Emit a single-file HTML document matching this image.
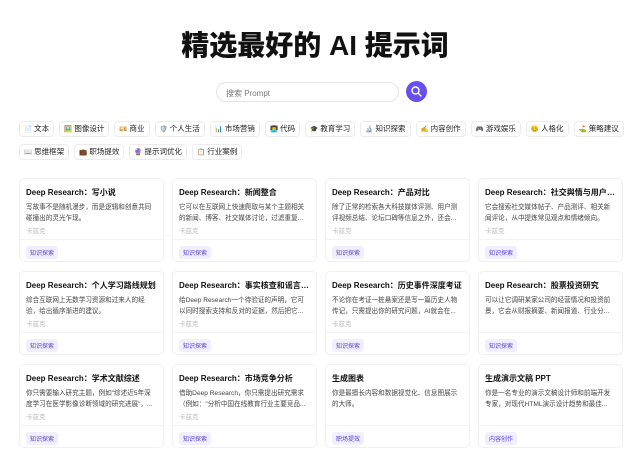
<!DOCTYPE html>
<html><head><meta charset="utf-8"><style>
*{box-sizing:border-box;margin:0;padding:0}
body{width:630px;height:453px;overflow:hidden;background:#fff;font-family:"Liberation Sans","Noto Sans CJK SC",sans-serif;color:#111}
h1{position:absolute;top:27px;left:0;width:630px;text-align:center;font-size:28px;font-weight:900;line-height:38px}
.search{position:absolute;left:216px;top:82px;width:183px;height:20px;border:1px solid #e3e3e8;border-radius:10px;font-size:8px;color:#777;padding:5px 9px}
.btn{position:absolute;left:406px;top:81px;width:21px;height:21px;border-radius:50%;background:#6a4ff0}
.chips{position:absolute;left:19px;top:121px;width:611px;display:flex;flex-wrap:wrap;gap:7px 5px}
.chip{height:16px;border:1px solid #ececf0;border-radius:4px;font-size:7.5px;line-height:14px;padding:0 4px;color:#222;white-space:nowrap}
.chip i{font-style:normal;font-size:6.5px}
.card{position:absolute;width:145px;height:84px;border:1px solid #f0f0f3;border-radius:5px}
.t{position:absolute;left:6px;top:8px;right:5px;font-size:8px;font-weight:bold;white-space:nowrap;overflow:hidden;text-overflow:ellipsis}
.d{position:absolute;left:6px;top:23px;right:8px;font-size:6.6px;line-height:11px;color:#444;height:22px;overflow:hidden}
.a{position:absolute;left:6px;top:46px;font-size:6.5px;color:#bbb}
.hr{position:absolute;left:0;right:0;top:60px;border-top:1px solid #f3f3f5}
.tag{position:absolute;left:6px;top:67px;font-size:6px;background:#f1eefe;color:#5a40d0;padding:2px 4px;border-radius:3px}
</style></head><body>
<h1>精选最好的 AI 提示词</h1>
<div class="search">搜索 Prompt</div>
<div class="btn"><svg width="21" height="21" viewBox="0 0 21 21"><circle cx="9.5" cy="9.5" r="3.5" fill="none" stroke="#fff" stroke-width="1.4"/><path d="M12 12l3 3" stroke="#fff" stroke-width="1.4" stroke-linecap="round"/></svg></div>
<div class="chips">
<span class="chip"><i>📄</i> 文本</span><span class="chip"><i>🖼️</i> 图像设计</span><span class="chip"><i>💴</i> 商业</span><span class="chip"><i>🛡️</i> 个人生活</span><span class="chip"><i>📊</i> 市场营销</span><span class="chip"><i>👨‍💻</i> 代码</span><span class="chip"><i>🎓</i> 教育学习</span><span class="chip"><i>🔬</i> 知识探索</span><span class="chip"><i>✍️</i> 内容创作</span><span class="chip"><i>🎮</i> 游戏娱乐</span><span class="chip"><i>😊</i> 人格化</span><span class="chip"><i>⛳</i> 策略建议</span>
<span class="chip"><i>📖</i> 思维框架</span><span class="chip"><i>💼</i> 职场提效</span><span class="chip"><i>🔮</i> 提示词优化</span><span class="chip"><i>📋</i> 行业案例</span>
</div>

<div class="card" style="left:19px;top:178px"><div class="t">Deep Research：写小说</div><div class="d">写故事不是随机漫步，而是逻辑和创意共同碰撞出的灵光乍现。</div><div class="a">卡兹克</div><div class="hr"></div><div class="tag">知识探索</div></div>
<div class="card" style="left:172px;top:178px"><div class="t">Deep Research：新闻整合</div><div class="d">它可以在互联网上快速爬取与某个主题相关的新闻、博客、社交媒体讨论，过滤重复...</div><div class="a">卡兹克</div><div class="hr"></div><div class="tag">知识探索</div></div>
<div class="card" style="left:325px;top:178px"><div class="t">Deep Research：产品对比</div><div class="d">除了正常的检索各大科技媒体评测、用户测评视频总结、论坛口碑等信息之外，还会...</div><div class="a">卡兹克</div><div class="hr"></div><div class="tag">知识探索</div></div>
<div class="card" style="left:478px;top:178px"><div class="t">Deep Research：社交舆情与用户情绪分析</div><div class="d">它会搜索社交媒体帖子、产品测评、相关新闻评论，从中提炼常见观点和情绪倾向。</div><div class="a">卡兹克</div><div class="hr"></div><div class="tag">知识探索</div></div>

<div class="card" style="left:19px;top:271px"><div class="t">Deep Research：个人学习路线规划</div><div class="d">综合互联网上无数学习资源和过来人的经验，给出循序渐进的建议。</div><div class="a">卡兹克</div><div class="hr"></div><div class="tag">知识探索</div></div>
<div class="card" style="left:172px;top:271px"><div class="t">Deep Research：事实核查和谣言粉碎</div><div class="d">给Deep Research一个待验证的声明，它可以同时搜索支持和反对的证据，然后把它...</div><div class="a">卡兹克</div><div class="hr"></div><div class="tag">知识探索</div></div>
<div class="card" style="left:325px;top:271px"><div class="t">Deep Research：历史事件深度考证</div><div class="d">不论你在考证一桩悬案还是写一篇历史人物传记，只需提出你的研究问题，AI就会在...</div><div class="a">卡兹克</div><div class="hr"></div><div class="tag">知识探索</div></div>
<div class="card" style="left:478px;top:271px"><div class="t">Deep Research：股票投资研究</div><div class="d">可以让它调研某家公司的经营情况和投资前景，它会从财报摘要、新闻报道、行业分...</div><div class="a"></div><div class="hr"></div><div class="tag">知识探索</div></div>

<div class="card" style="left:19px;top:364px"><div class="t">Deep Research：学术文献综述</div><div class="d">你只需要输入研究主题，例如"综述近5年深度学习在医学影像诊断领域的研究进展"，...</div><div class="a">卡兹克</div><div class="hr"></div><div class="tag">知识探索</div></div>
<div class="card" style="left:172px;top:364px"><div class="t">Deep Research：市场竞争分析</div><div class="d">借助Deep Research，你只需提出研究需求（例如："分析中国在线教育行业主要竞品...</div><div class="a">卡兹克</div><div class="hr"></div><div class="tag">知识探索</div></div>
<div class="card" style="left:325px;top:364px"><div class="t">生成图表</div><div class="d">你是最擅长内容和数据视觉化、信息图展示的大师。</div><div class="a"></div><div class="hr"></div><div class="tag">职场提效</div></div>
<div class="card" style="left:478px;top:364px"><div class="t">生成演示文稿 PPT</div><div class="d">你是一名专业的演示文稿设计师和前端开发专家，对现代HTML演示设计趋势和最佳...</div><div class="a"></div><div class="hr"></div><div class="tag">内容创作</div></div>
</body></html>
